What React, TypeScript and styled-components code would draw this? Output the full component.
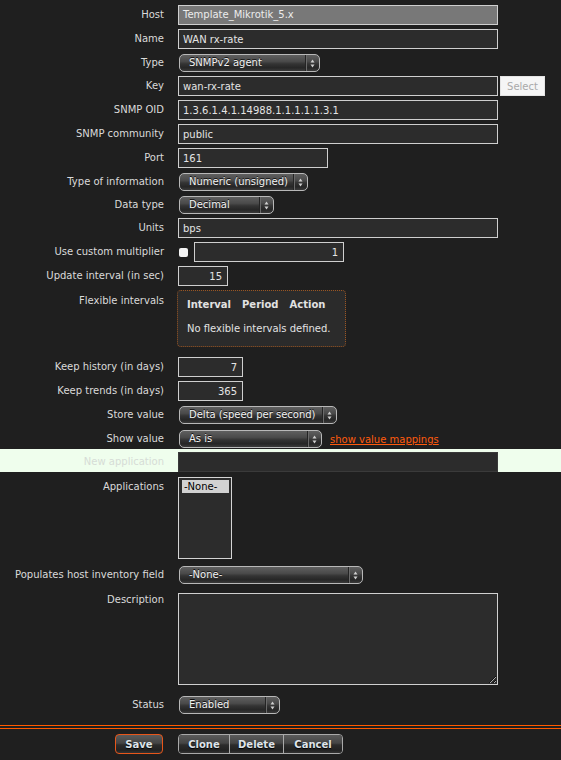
import React from "react";
import styled, { createGlobalStyle } from "styled-components";

const GlobalStyle = createGlobalStyle`
  body {
    margin: 0;
    background: #1f1f1f;
    font-family: "DejaVu Sans", Verdana, sans-serif;
    font-size: 10px;
    color: #d8d8d8;
  }
`;

const Form = styled.div`
  width: 561px;
  padding-top: 3px;
`;

const Row = styled.div<{ $pt?: number; $pb?: number; $top?: boolean; $band?: boolean }>`
  display: grid;
  grid-template-columns: 164px 1fr;
  column-gap: 14px;
  align-items: ${(p) => (p.$top ? "start" : "center")};
  padding: ${(p) => p.$pt ?? 2}px 0 ${(p) => p.$pb ?? 2}px;
  background: ${(p) => (p.$band ? "#effeed" : "transparent")};
`;

const Label = styled.div<{ $offset?: number; $muted?: boolean }>`
  text-align: right;
  white-space: nowrap;
  line-height: 12px;
  padding-top: ${(p) => p.$offset ?? 0}px;
  color: ${(p) => (p.$muted ? "#d6dcd6" : "#dadada")};
`;

const Field = styled.div`
  display: flex;
  align-items: center;
`;

const TextInput = styled.input<{ $w?: number; $num?: boolean; $dark?: boolean }>`
  box-sizing: border-box;
  width: ${(p) => p.$w ?? 320}px;
  height: 20px;
  margin: 0;
  padding: 0 ${(p) => (p.$num ? 5 : 4)}px;
  border: 1px solid ${(p) => (p.$dark ? "#3a3a3a" : "#cfcfcf")};
  border-radius: 0;
  background: #2c2c2c;
  color: #e4e4e4;
  font-family: inherit;
  font-size: 10px;
  text-align: ${(p) => (p.$num ? "right" : "left")};
  outline: none;
`;

const ReadOnlyValue = styled.div`
  box-sizing: border-box;
  width: 320px;
  height: 20px;
  padding: 0 4px;
  border: 1px solid #cfcfcf;
  background: #787878;
  color: #ececec;
  line-height: 17px;
  white-space: nowrap;
`;

const PickButton = styled.button`
  box-sizing: border-box;
  width: 45px;
  height: 20px;
  margin-left: 2px;
  padding: 0;
  border: 1px solid #e4e4e4;
  background: #f5f5f5;
  color: #a9a9a9;
  font-family: inherit;
  font-size: 10px;
`;

const SelectBox = styled.div<{ $w: number }>`
  box-sizing: border-box;
  display: flex;
  align-items: stretch;
  width: ${(p) => p.$w}px;
  height: 18px;
  margin-left: 1px;
  border: 1px solid #b8b8b8;
  border-radius: 5px;
  overflow: hidden;
  background: linear-gradient(
    to bottom,
    #5f5f5f 0%,
    #4a4a4a 40%,
    #343434 55%,
    #262626 80%,
    #3a3a3a 100%
  );
  color: #f2f2f2;
`;

const SelectValue = styled.span`
  flex: 1;
  padding-left: 9px;
  line-height: 15px;
  white-space: nowrap;
  overflow: hidden;
  text-shadow: 0 -1px 0 #111;
`;

const SelectArrows = styled.span`
  width: 13px;
  display: flex;
  align-items: center;
  justify-content: center;
  border-left: 1px solid #242424;
  box-shadow: inset 1px 0 0 #6a6a6a;
`;

const Link = styled.a`
  margin-left: 8px;
  color: #ff5b0d;
  text-decoration: underline;
  cursor: pointer;
`;

const Check = styled.span`
  width: 9px;
  height: 9px;
  margin: 1px 6px 0 1px;
  border-radius: 2px;
  background: #f4f4f4;
`;

const FlexBox = styled.div`
  box-sizing: border-box;
  width: 169px;
  height: 57px;
  margin-left: -1px;
  padding: 7px 0 0 9px;
  border: 1px dotted #9a5522;
  border-radius: 4px;
  background: #2b2b2b;
  color: #e2e2e2;
`;

const FlexHead = styled.div`
  display: flex;
  gap: 11px;
  font-weight: bold;
  line-height: 14px;
`;

const FlexEmpty = styled.div`
  margin-top: 10px;
  line-height: 14px;
`;

const ListBox = styled.div`
  box-sizing: border-box;
  width: 54px;
  height: 82px;
  padding: 2px 2px 0 3px;
  border: 1px solid #d4d4d4;
  background: #2c2c2c;
`;

const ListItem = styled.div<{ $selected?: boolean }>`
  height: 13px;
  line-height: 13px;
  padding-left: 2px;
  background: ${(p) => (p.$selected ? "#d2d2d2" : "transparent")};
  color: ${(p) => (p.$selected ? "#000" : "#ddd")};
  font-size: 10px;
`;

const TextArea = styled.textarea`
  box-sizing: border-box;
  width: 320px;
  height: 92px;
  margin: 0;
  padding: 3px 4px;
  border: 1px solid #d0d0d0;
  background: #2c2c2c;
  color: #e4e4e4;
  font-family: inherit;
  font-size: 10px;
  outline: none;
  display: block;
`;

const Divider = styled.div`
  margin-top: 9px;
  height: 2px;
  border-top: 1px solid #ff5a00;
  border-bottom: 1px solid #ff5a00;
`;

const Footer = styled.div`
  display: grid;
  grid-template-columns: 164px 1fr;
  column-gap: 14px;
  padding-top: 5px;
`;

const FooterLeft = styled.div`
  display: flex;
  justify-content: flex-end;
  padding-right: 1px;
`;

const ButtonGroup = styled.div`
  display: flex;
  width: max-content;
  border: 1px solid #a9a9a9;
  border-radius: 4px;
  overflow: hidden;
`;

const Button = styled.button<{ $w: number; $primary?: boolean; $first?: boolean }>`
  box-sizing: border-box;
  width: ${(p) => p.$w}px;
  height: ${(p) => (p.$primary ? 20 : 18)}px;
  margin: 0;
  padding: 0;
  border: ${(p) => (p.$primary ? "1px solid #e8561a" : "none")};
  border-left: ${(p) =>
    p.$primary ? "1px solid #e8561a" : p.$first ? "none" : "1px solid #a9a9a9"};
  border-radius: ${(p) => (p.$primary ? "4px" : "0")};
  background: linear-gradient(
    to bottom,
    #5a5a5a 0%,
    #454545 45%,
    #2c2c2c 55%,
    #222 85%,
    #333 100%
  );
  color: #dfe4ea;
  font-family: inherit;
  font-size: 10px;
  font-weight: bold;
  text-shadow: 0 1px 1px #000;
`;

const Arrows = () => (
  <svg width="5" height="9" viewBox="0 0 5 9">
    <path d="M2.5 0.5 L4.5 3.5 L0.5 3.5 Z" fill="#cfcfcf" />
    <path d="M2.5 8.5 L4.5 5.5 L0.5 5.5 Z" fill="#cfcfcf" />
  </svg>
);

const Select: React.FC<{ w: number; value: string }> = ({ w, value }) => (
  <SelectBox $w={w}>
    <SelectValue>{value}</SelectValue>
    <SelectArrows>
      <Arrows />
    </SelectArrows>
  </SelectBox>
);

const App: React.FC = () => {
  return (
    <>
      <GlobalStyle />
      <Form>
        <Row>
          <Label>Host</Label>
          <Field>
            <ReadOnlyValue>Template_Mikrotik_5.x</ReadOnlyValue>
          </Field>
        </Row>
        <Row>
          <Label>Name</Label>
          <Field>
            <TextInput defaultValue="WAN rx-rate" />
          </Field>
        </Row>
        <Row $pt={3}>
          <Label>Type</Label>
          <Field>
            <Select w={141} value="SNMPv2 agent" />
          </Field>
        </Row>
        <Row>
          <Label>Key</Label>
          <Field>
            <TextInput defaultValue="wan-rx-rate" />
            <PickButton>Select</PickButton>
          </Field>
        </Row>
        <Row>
          <Label>SNMP OID</Label>
          <Field>
            <TextInput defaultValue="1.3.6.1.4.1.14988.1.1.1.1.1.3.1" />
          </Field>
        </Row>
        <Row>
          <Label>SNMP community</Label>
          <Field>
            <TextInput defaultValue="public" />
          </Field>
        </Row>
        <Row>
          <Label>Port</Label>
          <Field>
            <TextInput $w={150} defaultValue="161" />
          </Field>
        </Row>
        <Row $pt={3}>
          <Label>Type of information</Label>
          <Field>
            <Select w={129} value="Numeric (unsigned)" />
          </Field>
        </Row>
        <Row $pt={3}>
          <Label>Data type</Label>
          <Field>
            <Select w={95} value="Decimal" />
          </Field>
        </Row>
        <Row>
          <Label>Units</Label>
          <Field>
            <TextInput defaultValue="bps" />
          </Field>
        </Row>
        <Row>
          <Label>Use custom multiplier</Label>
          <Field>
            <Check />
            <TextInput $w={150} $num defaultValue="1" />
          </Field>
        </Row>
        <Row>
          <Label>Update interval (in sec)</Label>
          <Field>
            <TextInput $w={50} $num defaultValue="15" />
          </Field>
        </Row>
        <Row $top $pb={8}>
          <Label $offset={5}>Flexible intervals</Label>
          <Field>
            <FlexBox>
              <FlexHead>
                <span>Interval</span>
                <span>Period</span>
                <span>Action</span>
              </FlexHead>
              <FlexEmpty>No flexible intervals defined.</FlexEmpty>
            </FlexBox>
          </Field>
        </Row>
        <Row>
          <Label>Keep history (in days)</Label>
          <Field>
            <TextInput $w={65} $num defaultValue="7" />
          </Field>
        </Row>
        <Row>
          <Label>Keep trends (in days)</Label>
          <Field>
            <TextInput $w={65} $num defaultValue="365" />
          </Field>
        </Row>
        <Row $pt={3}>
          <Label>Store value</Label>
          <Field>
            <Select w={158} value="Delta (speed per second)" />
          </Field>
        </Row>
        <Row $pt={4} $pb={1}>
          <Label>Show value</Label>
          <Field>
            <Select w={143} value="As is" />
            <Link>show value mappings</Link>
          </Field>
        </Row>
        <Row $band $pt={3} $pb={0}>
          <Label $muted>New application</Label>
          <Field>
            <TextInput $dark defaultValue="" />
          </Field>
        </Row>
        <Row $top $pt={5}>
          <Label $offset={4}>Applications</Label>
          <Field>
            <ListBox>
              <ListItem $selected>-None-</ListItem>
            </ListBox>
          </Field>
        </Row>
        <Row $pt={5} $pb={3}>
          <Label>Populates host inventory field</Label>
          <Field>
            <Select w={184} value="-None-" />
          </Field>
        </Row>
        <Row $top $pt={6} $pb={4}>
          <Label $offset={1}>Description</Label>
          <Field>
            <TextArea />
          </Field>
        </Row>
        <Row $pt={7}>
          <Label>Status</Label>
          <Field>
            <Select w={101} value="Enabled" />
          </Field>
        </Row>
        <Divider />
        <Footer>
          <FooterLeft>
            <Button $w={48} $primary>Save</Button>
          </FooterLeft>
          <div>
            <ButtonGroup>
              <Button $w={50} $first>Clone</Button>
              <Button $w={54}>Delete</Button>
              <Button $w={59}>Cancel</Button>
            </ButtonGroup>
          </div>
        </Footer>
      </Form>
    </>
  );
};

export default App;
